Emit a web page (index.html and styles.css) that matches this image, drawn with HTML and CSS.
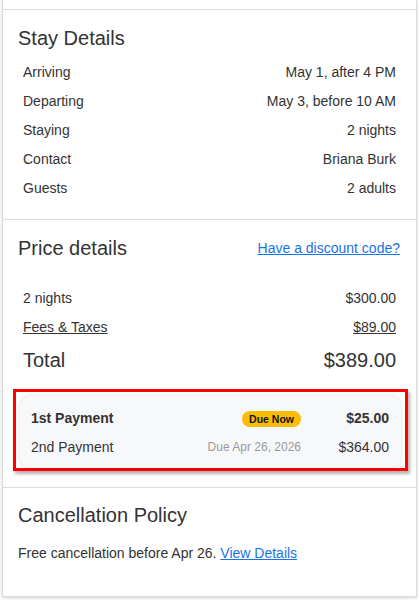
FILE: index.html
```html
<!DOCTYPE html>
<html lang="en">
<head>
<meta charset="utf-8">
<title>Stay Details</title>
<link rel="stylesheet" href="styles.css">
</head>
<body>
<div class="card">
  <div class="prev"></div>

  <section class="section stay">
    <h2 class="heading">Stay Details</h2>
    <div class="rows">
      <div class="row"><span>Arriving</span><span>May 1, after 4 PM</span></div>
      <div class="row"><span>Departing</span><span>May 3, before 10 AM</span></div>
      <div class="row"><span>Staying</span><span>2 nights</span></div>
      <div class="row"><span>Contact</span><span>Briana Burk</span></div>
      <div class="row"><span>Guests</span><span>2 adults</span></div>
    </div>
  </section>

  <section class="section price">
    <div class="heading-row">
      <h2 class="heading">Price details</h2>
      <a class="link" href="#">Have a discount code?</a>
    </div>
    <div class="rows price-rows">
      <div class="row"><span>2 nights</span><span>$300.00</span></div>
      <div class="row underline"><span>Fees &amp; Taxes</span><span>$89.00</span></div>
      <div class="row total"><span>Total</span><span>$389.00</span></div>
    </div>
    <div class="highlight">
      <div class="payments">
        <div class="pay first">
          <span class="pay-label">1st Payment</span>
          <span class="badge">Due Now</span>
          <span class="pay-amount">$25.00</span>
        </div>
        <div class="pay">
          <span class="pay-label">2nd Payment</span>
          <span class="due">Due Apr 26, 2026</span>
          <span class="pay-amount">$364.00</span>
        </div>
      </div>
    </div>
  </section>

  <section class="section cancel">
    <h2 class="heading">Cancellation Policy</h2>
    <p class="policy">Free cancellation before Apr 26. <a class="link" href="#">View Details</a></p>
  </section>
</div>
</body>
</html>
```

FILE: styles.css
```css
* { box-sizing: border-box; }

html, body {
  margin: 0;
  padding: 0;
  background: #ffffff;
}

body {
  font-family: "Liberation Sans", Arial, sans-serif;
  color: #333333;
  font-size: 14px;
  width: 419px;
  height: 600px;
  overflow: hidden;
}

.card {
  margin-left: 2px;
  width: 415px;
  border: 1px solid #dcdcdc;
  border-top: none;
  background: #ffffff;
  box-shadow: 0 1px 3px rgba(0, 0, 0, 0.18);
}

.prev {
  height: 10px;
  border-bottom: 1px solid #dcdcdc;
}

.section {
  padding: 16px 15px 16px 15px;
  border-bottom: 1px solid #dcdcdc;
}

.section.cancel {
  border-bottom: none;
  padding: 15px 15px 33px 15px;
}

.heading {
  margin: 0;
  font-size: 20px;
  line-height: 24px;
  font-weight: 400;
  color: #333333;
}

.heading-row {
  display: flex;
  justify-content: space-between;
  align-items: center;
  padding-right: 1px;
}

.link {
  color: #1a73e8;
  text-decoration: underline;
  font-size: 14px;
  line-height: 20px;
}

.rows {
  margin-top: 8px;
  padding: 0 5px 0 5px;
}

.price-rows {
  margin-top: 24px;
}

.row {
  display: flex;
  justify-content: space-between;
  height: 29px;
  line-height: 29px;
}

.row.underline span {
  text-decoration: underline;
}

.row.total {
  height: 36px;
  line-height: 36px;
  font-size: 20px;
}

.highlight {
  margin: 11px -7px 0 -5px;
  border: 3px solid #ff0000;
  padding: 4px 4px 0 4px;
  box-shadow: 2px 3px 3px rgba(0, 0, 0, 0.3);
}

.payments {
  background: #f7f8fa;
  border-radius: 10px;
  box-shadow: 0 0 4px rgba(0, 0, 0, 0.15);
  padding: 8px 12px 6px 11px;
}

.pay {
  display: grid;
  grid-template-columns: 1fr auto 88px;
  align-items: center;
  height: 29px;
  line-height: 29px;
}

.pay.first {
  font-weight: 700;
}

.pay-amount {
  text-align: right;
}

.badge {
  background: #fbbc04;
  color: #111111;
  font-size: 10.5px;
  font-weight: 700;
  line-height: 16px;
  height: 16px;
  padding: 0 7px;
  border-radius: 8px;
}

.due {
  font-size: 12px;
  color: #9a9a9a;
}

.policy {
  margin: 16px 0 0 0;
  line-height: 20px;
  font-size: 14px;
}
```
